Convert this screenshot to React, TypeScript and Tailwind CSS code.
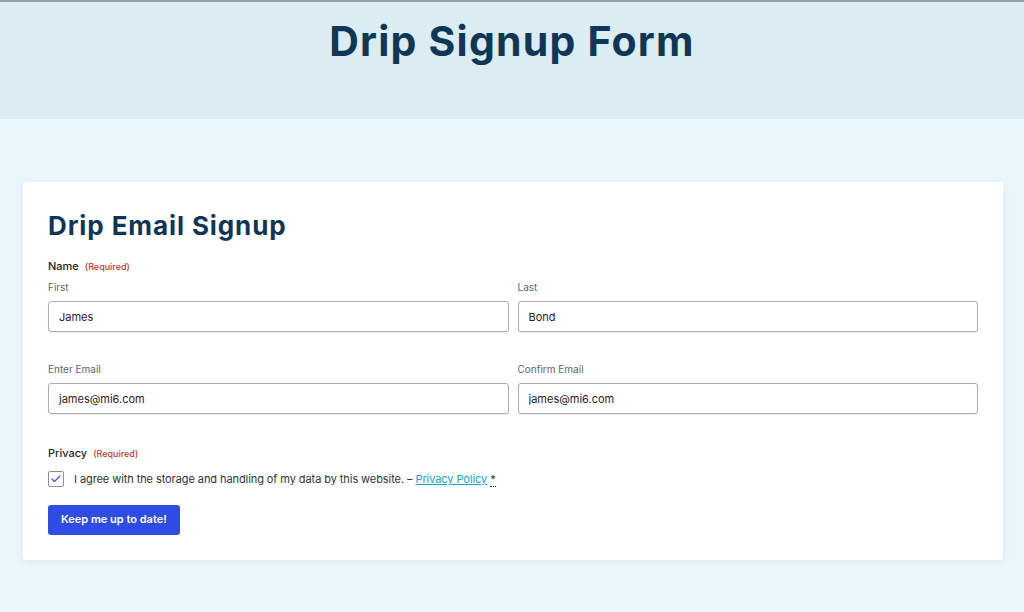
import { Check } from "lucide-react";

type Field = { label: string; value: string };

function TextField({ label, value }: Field) {
  return (
    <div className="flex flex-col">
      <label className="text-[10px] leading-[14px] text-[#5f6368] mb-[7px]">{label}</label>
      <input
        readOnly
        value={value}
        className="h-[31px] w-full rounded-[3px] border border-[#a9adb3] bg-white px-[10px] text-[11px] text-[#1f2328] shadow-[0_1px_1px_rgba(0,0,0,0.08)] outline-none"
      />
    </div>
  );
}

function Required() {
  return <span className="ml-[6px] text-[9px] font-medium text-[#c0392b]">(Required)</span>;
}

export default function App() {
  return (
    <div className="min-h-[612px] bg-[#e9f6fb] font-['Inter',sans-serif]">
      {/* page header */}
      <header className="h-[119px] border-t-[2px] border-[#8fa1aa] bg-[#dbecf2] flex justify-center">
        <h1 className="mt-[15px] text-[41px] leading-[48px] font-bold tracking-[1.2px] text-[#0f3657]">
          Drip Signup Form
        </h1>
      </header>

      <main className="px-[23px] pt-[63px] pr-[21px]">
        <section className="rounded-[3px] bg-white px-[25px] pt-[28px] pb-[25px] shadow-[0_2px_10px_rgba(20,60,90,0.05)]">
          <h2 className="text-[26px] leading-[32px] font-bold tracking-[0.9px] text-[#0f3657]">
            Drip Email Signup
          </h2>

          <form className="mt-[17px]">
            <div className="text-[11px] leading-[14px] font-medium text-[#1d2327]">
              Name
              <Required />
            </div>
            <div className="mt-[6px] grid grid-cols-2 gap-[9px]">
              <TextField label="First" value="James" />
              <TextField label="Last" value="Bond" />
            </div>

            <div className="mt-[30px] grid grid-cols-2 gap-[9px]">
              <TextField label="Enter Email" value="james@mi6.com" />
              <TextField label="Confirm Email" value="james@mi6.com" />
            </div>

            <div className="mt-[32px] text-[11px] leading-[14px] font-medium text-[#1d2327]">
              Privacy
              <Required />
            </div>
            <label className="mt-[10px] flex items-center gap-[10px] text-[11px] tracking-[-0.08px] text-[#2c3338]">
              <span className="flex h-[16px] w-[16px] items-center justify-center rounded-[2px] border border-[#8c9096] bg-white">
                <Check size={12} strokeWidth={2.4} className="text-[#3858e9]" />
              </span>
              <span>
                I agree with the storage and handling of my data by this website. –{" "}
                <a href="#" className="text-[#1aa3c4] underline">Privacy Policy</a>{" "}
                <span className="border-b border-dotted border-[#2c3338]">*</span>
              </span>
            </label>

            <button
              type="button"
              className="mt-[17px] h-[30px] rounded-[3px] bg-[#2f4de2] px-[13px] text-[11px] font-semibold text-white"
            >
              Keep me up to date!
            </button>
          </form>
        </section>
      </main>
    </div>
  );
}
